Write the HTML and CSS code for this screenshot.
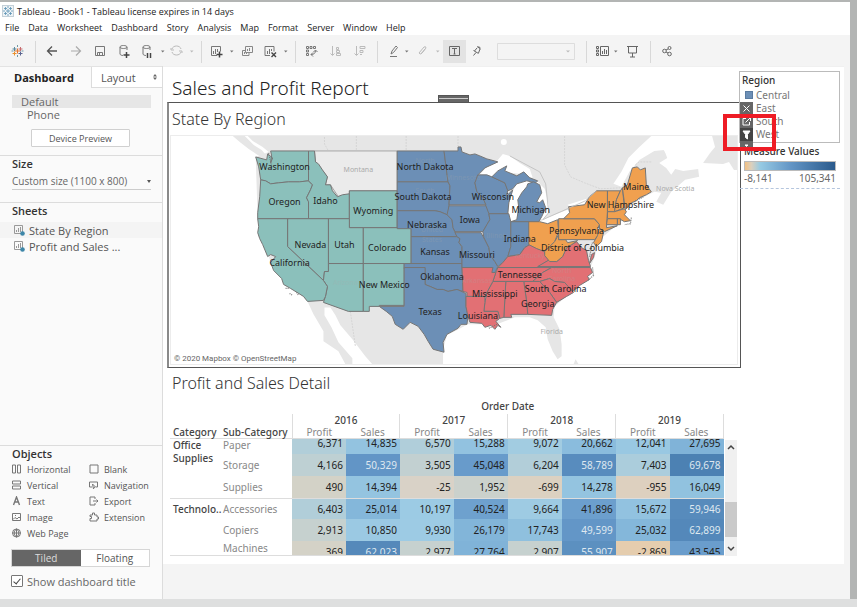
FILE: index.html
```html
<!DOCTYPE html>
<html lang="en">

<head>
	<meta charset="UTF-8">
	<title>Tableau - Book1</title>
	<link rel="stylesheet" href="styles.css">
</head>

<body>
	<div class="window">
		<header class="title_bar">
			<svg class="logo" width="12" height="12" viewBox="0 0 12 12">
				<rect x="0.5" y="0.5" width="11" height="11" fill="#eef3f6" stroke="#c3d0d8"/>
				<path d="M6 4v4M4 6h4M3.500 2v3M2 3.500h3M8.500 2v3M7 3.500h3M3.500 7v3M2 8.500h3M8.500 7v3M7 8.500h3M6 1v2M6 9v2M1 6h2M9 6h2" stroke="#5c93b5" stroke-width="0.8"/>
			</svg>
			<span>Tableau - Book1 - Tableau license expires in 14 days</span>
		</header>
		<nav class="menu">
			<button>File</button>
			<button>Data</button>
			<button>Worksheet</button>
			<button>Dashboard</button>
			<button>Story</button>
			<button>Analysis</button>
			<button>Map</button>
			<button>Format</button>
			<button>Server</button>
			<button>Window</button>
			<button>Help</button>
		</nav>

		<!-- Toolbar -->
		<svg class="toolbar" height="31" viewBox="0 35 850 31" preserveAspectRatio="xMinYMin meet" role="img" aria-label="Toolbar">
			<path stroke="#d8d8d8" d="M35.500 41v22M201.500 41v22M295.500 41v22M377.500 41v22M586.500 41v22M650.500 41v22"/>
			<g stroke-width="1">
				<path d="M17.500 48.500v5M15 51h5" stroke="#e8762c"/>
				<path d="M14.500 47v4M12.500 49h4" stroke="#59879b"/>
				<path d="M20.500 47v4M18.500 49h4" stroke="#c76b6e"/>
				<path d="M14.500 51.500v4M12.500 53.500h4" stroke="#eb912c"/>
				<path d="M20.500 51.500v4M18.500 53.500h4" stroke="#5b6591"/>
				<path d="M17.500 45v2M17.500 55v2M11.500 51h2M21.500 51h2" stroke="#7099a6"/>
			</g>
			<g fill="none" stroke="#555">
				<path d="M57 51h-9M52 46.500L47.500 51l4.500 4.500" stroke-width="1.300"/>
				<path d="M71 51h9M76 46.500l4.500 4.500l-4.500 4.500" stroke="#aaa" stroke-width="1.200"/>
				<path d="M95.500 46.500h9v9h-9zM97.500 55.500v-3h5v3M99.500 55v-2" stroke="#777"/>
				<path d="M127 50v-3c0-2-7-2-7 0v7c0 1 2 1.500 3 1.500M120 47c0 2 7 2 7 0" stroke="#777"/>
				<path d="M126.500 52v6M123.500 55h6" stroke="#444" stroke-width="1.500"/>
				<path d="M150 50v-3c0-2-7-2-7 0v7c0 1 2 1.500 3 1.500M143 47c0 2 7 2 7 0" stroke="#777"/>
				<path d="M147.500 53v5M150.500 53v5" stroke="#444" stroke-width="1.500"/>
				<path d="M172 49c1-4 8-4 9 0M172 52c1 4 8 4 9 0M171 48v2h3M182 53v-2h-3" stroke="#bbb"/>
				<path d="M217 55.500h-5.500v-9h9v5M213.500 54v-3M215.500 54v-5M217.500 52v-3" stroke="#777"/>
				<path d="M219.500 51.500v6M216.500 54.500h6" stroke="#444" stroke-width="1.500"/>
				<path d="M245.500 46.500h7v6h-7zM249 52.500v3h-6.500v-5h3M247.500 51v-2M249.500 51v-3M244.500 54v-2M246.500 54v-1" stroke="#888"/>
				<path d="M270 55.500h-5v-9h9v5M267.500 54v-3M269.500 54v-5M271.500 51v-2" stroke="#777"/>
				<path d="M271.500 52.500l4.500 4.500M276 52.500l-4.500 4.500" stroke="#444" stroke-width="1.400"/>
				<path d="M306.500 46.500h2v2h-2zM310 46.500h2v2h-2zM313.500 46.500h2v2h-2zM306.500 50h2v2h-2zM306.500 53.500h2v2h-2zM315.500 50.500q0 4-4.500 4M313 52.500l-2 2l2 2M313.500 52l2-2l2 2" stroke="#777"/>
				<path d="M332.500 46v9M330.500 53.500l2 2l2-2M336.500 47.500h2v2h-2zM336.500 50.500h3v2h-3zM336.500 53.500h4v2h-4z" stroke="#bbb"/>
				<path d="M356.500 46v9M354.500 53.500l2 2l2-2M360 46.500h5v2h-5zM360 50.500h3v2h-3zM360 54.500h2" stroke="#bbb"/>
				<path d="M391 54l1-3l4-5l1.500 1.500l-4 5zM390 56.500h7" stroke="#777"/>
				<path d="M419 53l5-6q2-1 2 1l-4 5q-2 2-3 0M421 54l4-5" stroke="#bbb"/>
			</g>
			<path fill="#777" d="M161 50.500h3.500l-1.800 2zM230 50.500h3.500l-1.800 2zM284 50.500h3.500l-1.800 2zM405 50.500h3.500l-1.800 2zM614 50.500h3.500l-1.800 2z"/>
			<path fill="#bbb" d="M190 50.500h3.500l-1.800 2zM436 50.500h3.500l-1.800 2zM566 50.500h4l-2 2z"/>
			<rect x="443" y="40" width="23" height="23" fill="#e3e3e3"/>
			<g fill="none" stroke="#666">
				<path d="M449.500 46.500h10v9h-10zM452 48.500h5M454.500 49v5M453.500 54h2"/>
				<path d="M478.500 46.500l2 1.500M477 48l-2.500 3M480 49l-1.500 4M473.500 50.500l5 3M476 52.500l-2.500 3M477 46.500l3.500 2.500"/>
				<path d="M497.500 43.500h77v16h-77z" stroke="#ddd"/>
				<path d="M596.500 46.500h2v2h-2zM596.500 50h2v2h-2zM596.500 53.500h2v2h-2zM600.500 46.500h8v9h-8zM602.500 54v-3M604.500 54v-5M606.500 54v-4"/>
				<path d="M627 46.500h11M628.500 47v6h8v-6M632.500 53v4M630 57h5"/>
				<circle cx="664.500" cy="51" r="1.800"/>
				<circle cx="669.500" cy="48" r="1.500"/>
				<circle cx="669.500" cy="54" r="1.800"/>
				<path d="M666 50l2-1M666 52l2 1"/>
			</g>
		</svg>

		<div class="workspace">
			<aside class="sidebar">
				<div class="tabs">
					<button class="tab active">Dashboard</button>
					<button class="tab">Layout
						<svg width="4" height="6" viewBox="0 0 4 6"><path d="M0 2.500L2 0l2 2.500zM0 3.500L2 6l2-2.500z" fill="#666"/></svg>
					</button>
				</div>
				<section class="device">
					<div class="device_item selected">Default</div>
					<div class="device_item phone">Phone</div>
					<button class="preview">Device Preview</button>
				</section>
				<section class="size">
					<h3><label for="size">Size</label></h3>
					<div class="select_box">
						<select id="size">
							<option>Custom size (1100 x 800)</option>
						</select>
					</div>
				</section>
				<section class="sheets">
					<h3>Sheets</h3>
					<div class="sheet hovered">
						<svg width="11" height="11" viewBox="0 0 11 11"><path d="M.5.500h8v8h-8zM2.500 7V5M4.500 7V3M6.500 7V2" fill="none" stroke="#999"/><circle cx="8.500" cy="8.500" r="2.300" fill="#3d86a8"/></svg>
						State By Region
					</div>
					<div class="sheet">
						<svg width="11" height="11" viewBox="0 0 11 11"><path d="M.5.500h8v8h-8zM2.500 7V5M4.500 7V3M6.500 7V2" fill="none" stroke="#999"/><circle cx="8.500" cy="8.500" r="2.300" fill="#3d86a8"/></svg>
						Profit and Sales ...
					</div>
				</section>
				<section class="objects">
					<h3>Objects</h3>
					<div class="object_list">
						<div><svg viewBox="0 0 10 10"><path d="M.5 1h3v8h-3zM5.500 1h3v8h-3z"/></svg>Horizontal</div>
						<div><svg viewBox="0 0 10 10"><path d="M1 1h8v8H1z"/></svg>Blank</div>
						<div><svg viewBox="0 0 10 10"><path d="M.5 1h8v3h-8zM.5 6h8v3h-8z"/></svg>Vertical</div>
						<div><svg viewBox="0 0 10 10"><path d="M3 7H.5V2h8v5H7M3.500 4l3 3-1.500.5-.5 1.500z"/></svg>Navigation</div>
						<div><svg viewBox="0 0 10 10"><path d="M1.500 9L4.500 1 7.500 9M2.500 6h4" stroke-width="1.400"/></svg>Text</div>
						<div><svg viewBox="0 0 10 10"><path d="M6 3V1H1v8h5V7M4 5h5M7.500 3.500L9 5 7.500 6.500"/></svg>Export</div>
						<div><svg viewBox="0 0 10 10"><path d="M.5 1.500h8v7h-8zM1 7.500l2-2 2 1.500L7 5l1.500 1.500M3 3.500h1"/></svg>Image</div>
						<div><svg viewBox="0 0 10 10"><path d="M1 9V6.500h1.500v-2H1V3h2.500V1h2v2H8v2h1.500v2H8v2z"/></svg>Extension</div>
						<div><svg viewBox="0 0 10 10"><circle cx="4.500" cy="5" r="4"/><path d="M.5 5h8M4.500 1v8M4.500 1c-3 2-3 6 0 8c3-2 3-6 0-8"/></svg>Web Page</div>
					</div>
					<div class="mode">
						<button class="on">Tiled</button>
						<button>Floating</button>
					</div>
					<label class="show_title"><input type="checkbox" checked> Show dashboard title</label>
				</section>
			</aside>

			<main class="canvas">
				<div class="dashboard">
					<div class="sheets_column">
						<h1>Sales and Profit Report</h1>
						<section class="map_panel">
							<span class="grip"></span>
							<h2>State By Region</h2>
							<svg class="map" viewBox="170 136 568 229">
								<!-- Base map: Canada, Mexico, Florida and the uncoloured states -->
								<g fill="#e6e6e6">
									<path d="M232 136h12l9 9l8 5l6 7l-2 2l-8-4l-9-6l-9-7z"/>
									<path d="M247 136H652L640 147L629 158L622 172L614 184L622 187L630 172L640 160L655 151L665 150L668 158L660 163L667 168L672 175L676 169L684 171L699 169L700 177L686 180L672 192L664 205L657 202L662 193L655 192L647 196L640 200L626 210L626 218L600 240L595 258L590 270L575 290L555 307L554 318L560 330L562 345L562 357L558 360L553 352L548 340L546 328L538 321L530 318H515L497 325L485 325L468 325L447 336L443 350L443 365H372L365 357L352 340L340 326L335 316L330 308L324 308L324 316L331 328L338 343L352 359V365H345L338 352L323 342L323 332L313 315L307 302L270 263L257 219L255 157L268 152L262 147L252 141z"/>
									<path d="M713 136h25v34l-3 0l-5-8l-6 2l-20-1l7-10l5-6z"/>
									<path d="M574 365l2-5l3 5z"/>
								</g>
								<g fill="none" stroke="#d5d5d5" stroke-dasharray="2 1">
									<path d="M324 137v7l4 7M356 136v15M406 136v15M458 136v10M565 136v29l6 12l14 6l16 6l20-1M636 165l4-3l12 0M460 157l10 30M350 312l5 35"/>
								</g>
								<path d="M397 191H349V197L338 197L330 185L325 185L327 177L315 162L314 151H397z" fill="#ebebeb" stroke="#a5a5a5"/>

								<!-- Great Lakes and sea inlets -->
								<g fill="#fff">
									<path d="M480 175L487 167L498 160L503 154L510 156L520 163L530 169L533 178L520 174L503 172L492 177z"/>
									<path d="M513 187L520 182L530 181L538 182L545 189L549 205L548 214L543 220L537 217L530 195L520 203L517 220L512 224L508 220L510 200z"/>
									<path d="M540 222L550 217L568 210L572 213L559 221L550 225zM568 205L587 199L588 204L571 208z"/>
									<path d="M655 138L663 136H710L703 150L695 161L682 165L673 162L660 144L648 146z"/>
									<circle cx="504" cy="142" r="3"/>
								</g>

								<g class="west">
									<path d="M270 151H308V181L299 182L288 182L278 183L270 184L265 181L260 180L258 167L255 157L266 160L267 154L272 158L270 163L271 156z"/>
									<path d="M260 180L265 181L270 184L278 183L288 182L299 182L308 181L312 185L310 190L306 198L308 202V219H257V213L259 197z"/>
									<path d="M308 151H314L315 162L318 164L322 170L327 177L325 185L330 185L332 191L337 197L342 195L349 194V219H308V202L306 198L310 190L312 185L308 181z"/>
									<path d="M349 191H397V228H349z"/>
									<path d="M287 219H328V272L324 272L323 281L287 247z"/>
									<path d="M328 219H349V228H363V264H328z"/>
									<path d="M363 228H411V264H363z"/>
									<path d="M328 264H363V312H348L323 303L325 297L327 287L323 281L324 272L328 272z"/>
									<path d="M363 264H404V306H379V307H369V312H363z"/>
									<path d="M257 219H287V247L323 281L327 287L325 297L323 301L307 302L303 297L290 289L283 285L281 279L273 271L270 263L275 257L270 255L267 257L262 245L259 239L257 233L258 227z"/>
								</g>
								<g class="central">
									<path d="M397 151H444L446 167L448 182H397z"/>
									<path d="M397 182H448L450 186L449 205L449 212L447 215L440 212L435 211H397z"/>
									<path d="M397 211H435L440 212L447 215L452 220L453 228L457 237H411V229H397z"/>
									<path d="M411 237H457L460 239L459 243L462 247V264H411z"/>
									<path d="M404 264H462L463 292L457 290L448 292L443 290L437 290L430 287L425 285V269H404z"/>
									<path d="M404 268H425V285L430 287L437 290L443 290L448 292L457 290L466 294V307L468 317L467 325L461 325L458 329L447 335L443 343L444 353L433 350L428 342L424 335L418 327L410 323L403 330L395 325L392 317L386 312L379 307H404z"/>
									<path d="M444 151H458V147H461L462 152L470 155L475 154L480 156L487 159L491 160L498 162L485 168L478 175L475 183L477 192L483 198L486 205H449L450 186L448 182L446 167z"/>
									<path d="M478 175L487 175L492 177L505 183L508 190L507 196L513 190L509 203L508 214H489L485 208L486 205L483 198L477 192L475 183z"/>
									<path d="M492 177L498 171L507 166L505 171L517 176L524 172L530 178L538 181L536 183L527 181L517 184L513 189L508 191L505 183z"/>
									<path d="M527 187L528 184L534 182L540 185L542 193L537 202L540 203L543 200L546 208L542 217L539 222H511L517 220L519 208L518 200L522 193z"/>
									<path d="M449 206H486L489 214L490 220L487 225L483 232H455L453 228L452 220L447 215z"/>
									<path d="M455 233H481L485 240L489 248L490 255L495 262L498 267L495 273H491L493 268H462V247L459 243L460 239L457 237z"/>
									<path d="M489 214H509L511 222V247L508 257L503 263L498 267L495 262L490 255L489 248L484 238L483 232L487 225L490 220z"/>
									<path d="M511 222H530V245L525 248L520 255L508 257L511 247z"/>
								</g>
								<g class="south">
									<path d="M498 268L503 263L508 257L520 255L525 248L530 245L540 250L545 252L545 256L550 260L542 265L538 268z"/>
									<path d="M538 267L550 260L557 262L563 257L567 248L577 242L582 248L587 251L589 261L591 267z"/>
									<path d="M592 255L595 253L594 258L590 264z"/>
									<path d="M498 268H552L543 273L533 282H493L496 273z"/>
									<path d="M552 268H591L593 273L588 277L590 280L580 286L572 293L565 283L555 282L550 279L540 282H533L543 273z"/>
									<path d="M540 282L550 279L555 282L565 283L574 293L567 297L557 303L550 293z"/>
									<path d="M524 282H540L550 293L557 303L553 310L552 316L528 315L527 303z"/>
									<path d="M506 282H524L527 303L528 315H511L512 318H504z"/>
									<path d="M493 282H506L504 318L500 319L498 312H484L485 303L487 293z"/>
									<path d="M462 268H493L492 273L496 273L493 282L487 293L485 297H467V293L463 292z"/>
									<path d="M466 297H485V303L484 312H498L500 319L496 322L501 328L498 326L495 330L491 326L485 328L482 324L470 323L468 317L466 307z"/>
								</g>
								<g class="east">
									<path d="M529 222L540 222L548 224L558 220L559 232L555 242L549 248L545 252L537 249L529 245z"/>
									<path d="M545 252L549 248L555 242L559 235V240H566L568 243L578 241L572 245L567 248L563 257L557 262H550L545 256z"/>
									<path d="M559 219H595L600 225L598 229L602 232L595 240H559z"/>
									<path d="M564 219L570 213L569 207L585 205L590 197L597 191H608V212L607 228L618 226L605 232L600 229V225L595 219z"/>
									<path d="M608 191H621L617 200L615 212H608z"/>
									<path d="M621 191L623 188L625 208L615 212L617 200z"/>
									<path d="M623 188L628 185L633 168L638 167L641 170L646 168L647 185L652 192L647 195L640 198L637 201L632 203L626 210z"/>
									<path d="M608 212H615L625 209L627 212L625 215L631 221L625 222L620 219H608z"/>
									<path d="M608 219H618V225H607zM618 219H621V225H618z"/>
									<path d="M600 228L604 233L602 242L597 247L594 243L598 236z"/>
								</g>
								<g fill="none" stroke="#777" stroke-width="1.200" stroke-dasharray="1 1">
									<path d="M285 289h4M289 294l3 2M296 293l2 3M593 243l-3 8M593 268l1 8l-6 5M632 218l-1 6l-6 1M590 257l2-9M636 201l8-4M268 153l3 13l-2 4M497 325l-8 4"/>
								</g>
								<path d="M510 156L540 172L546 184L549 213L543 220L586 201L597 191" fill="none" stroke="#bbb" stroke-width="0.800"/>

								<g class="place">
									<text x="358" y="172">Montana</text>
									<text x="676" y="191">Nova Scotia</text>
									<text x="552" y="335">Florida</text>
									<g opacity="0.250">
										<text x="425" y="163">North</text>
										<text x="425" y="193">South</text>
										<text x="463" y="180">Minnesota</text>
										<text x="432" y="232">United</text>
										<text x="432" y="242">States</text>
										<text x="497" y="238">Illinois</text>
										<text x="530" y="258">Kentucky</text>
										<text x="477" y="284">Arkansas</text>
										<text x="345" y="286">Arizona</text>
										<text x="562" y="274">North</text>
										<text x="562" y="282">Carolina</text>
									</g>
								</g>
								<g class="state">
									<text x="284" y="170">Washington</text>
									<text x="284" y="205">Oregon</text>
									<text x="325" y="204">Idaho</text>
									<text x="373" y="214">Wyoming</text>
									<text x="310" y="248">Nevada</text>
									<text x="344" y="248">Utah</text>
									<text x="387" y="251">Colorado</text>
									<text x="289" y="266">California</text>
									<text x="384" y="289">New Mexico</text>
									<text x="425" y="170">North Dakota</text>
									<text x="423" y="200">South Dakota</text>
									<text x="427" y="228">Nebraska</text>
									<text x="435" y="255">Kansas</text>
									<text x="442" y="281">Oklahoma</text>
									<text x="430" y="316">Texas</text>
									<text x="470" y="223">Iowa</text>
									<text x="477" y="258">Missouri</text>
									<text x="493" y="200">Wisconsin</text>
									<text x="531" y="213">Michigan</text>
									<text x="520" y="242">Indiana</text>
									<text x="520" y="279">Tennessee</text>
									<text x="495" y="298">Mississippi</text>
									<text x="478" y="320">Louisiana</text>
									<text x="538" y="308">Georgia</text>
									<text x="556" y="293">South Carolina</text>
									<text x="583" y="251">District of Columbia</text>
									<text x="577" y="234">Pennsylvania</text>
									<text x="621" y="208">New Hampshire</text>
									<text x="637" y="190">Maine</text>
								</g>
								<text class="credit" x="173" y="362">© 2020 Mapbox © OpenStreetMap</text>
							</svg>
							<div class="panel_tools">
								<button aria-label="Remove"><svg viewBox="0 0 13 13"><path d="M3.500 3.500l6 6M9.500 3.500l-6 6"/></svg></button>
								<button aria-label="Go to sheet"><svg viewBox="0 0 13 13"><path d="M6 3.500H3v6.500h6.500V7M5.500 7.500L10 3M7 2.500h3.500V6"/></svg></button>
								<button class="filter" aria-label="Use as filter"><svg viewBox="0 0 13 13"><path d="M3 3h7L7.500 6.500V11l-2-1.500v-3z" fill="#fff"/></svg></button>
								<button class="more" aria-label="More options"><svg viewBox="0 0 13 13"><path d="M5 4h3L6.500 5.500z" fill="#fff"/></svg></button>
							</div>
						</section>

						<section class="detail">
							<h2>Profit and Sales Detail</h2>
							<div class="table_wrap">
								<table>
									<colgroup>
										<col class="col_category">
										<col class="col_sub">
										<col span="8">
									</colgroup>
									<thead>
										<tr class="dimension"><th colspan="2"></th><th colspan="8">Order Date</th></tr>
										<tr class="years">
											<th colspan="2"></th>
											<th colspan="2">2016</th>
											<th colspan="2">2017</th>
											<th colspan="2">2018</th>
											<th colspan="2">2019</th>
										</tr>
										<tr class="measures">
											<th class="left">Category</th><th class="left sub_head">Sub-Category</th>
											<td class="year_start">Profit</td><td>Sales</td>
											<td class="year_start">Profit</td><td>Sales</td>
											<td class="year_start">Profit</td><td>Sales</td>
											<td class="year_start">Profit</td><td>Sales</td>
										</tr>
									</thead>
									<tbody id="detail_rows"></tbody>
								</table>
								<div class="scrollbar">
									<svg viewBox="0 0 12 14"><path d="M3 9l3-3l3 3"/></svg>
									<span class="thumb"></span>
									<svg viewBox="0 0 12 14"><path d="M3 5l3 3l3-3"/></svg>
								</div>
							</div>
						</section>
					</div>

					<div class="legends">
						<section class="legend region">
							<h4>Region</h4>
							<ul>
								<li><i class="swatch central_swatch"></i>Central</li>
								<li><i class="swatch"></i>East</li>
								<li><i class="swatch"></i>South</li>
								<li><i class="swatch"></i>West</li>
							</ul>
						</section>
						<section class="legend measure">
							<h4>Measure Values</h4>
							<div class="ramp"></div>
							<div class="ramp_range"><span>-8,141</span><span>105,341</span></div>
						</section>
						<span class="highlight"></span>
					</div>
				</div>
			</main>
		</div>
	</div>
	<script src="script.js"></script>
</body>

</html>
```

FILE: styles.css
```css
* {
	box-sizing: border-box;
}

body {
	margin: 0;
	min-height: 100vh;
	display: flex;
	padding: 2px 7px 8px 0;
	background: linear-gradient(#dedfdf, #dedfdf) bottom / 100% 8px no-repeat #b3b5b4;
	font-family: "Open Sans", "Noto Sans", sans-serif;
	font-size: 10px;
	color: #555;
}

h1, h2, h3, h4 {
	margin: 0;
	font-weight: normal;
}

button {
	font: inherit;
	color: inherit;
	padding: 0;
	margin: 0;
	border: 0;
	background: none;
}

.window {
	flex: 1;
	min-width: 0;
	display: flex;
	flex-direction: column;
	background: #fff;
}

.title_bar {
	display: flex;
	align-items: center;
	gap: 3px;
	height: 18px;
	padding-left: 2px;
	font-size: 9px;
	color: #222;
}

.menu {
	display: flex;
	gap: 9px;
	height: 15px;
	padding-left: 5px;
	font-size: 9px;
	line-height: 15px;
	color: #222;
}

.toolbar {
	display: block;
	width: 100%;
	background: #f4f4f4;
}

.workspace {
	flex: 1;
	display: flex;
}

/* Left pane */
.sidebar {
	width: 163px;
	display: flex;
	flex-direction: column;
	background: #fafafa;
	border-right: 1px solid #dcdcdc;
}

.sidebar h3 {
	font-size: 11px;
	font-weight: 600;
	line-height: 16px;
	color: #333;
	padding-left: 12px;
}

.tabs {
	display: flex;
	height: 22px;
	border-top: 1px solid #e3e3e3;
}

.tab {
	flex: 1;
	display: flex;
	align-items: center;
	justify-content: space-between;
	padding: 0 5px 0 9px;
	font-size: 11px;
	background: #fff;
	border-left: 1px solid #dcdcdc;
	border-bottom: 1px solid #dcdcdc;
}

.tab.active {
	flex: 0 0 91px;
	padding-left: 14px;
	font-weight: bold;
	color: #222;
	background: none;
	border: 0;
}

.device {
	height: 67px;
	padding: 7px 11px 0 12px;
}

.device_item {
	height: 13px;
	line-height: 13px;
	padding-left: 9px;
	font-size: 11px;
	color: #666;
}

.device_item.selected {
	background: #e6e6e6;
}

.device_item.phone {
	padding-left: 15px;
}

.preview {
	display: block;
	width: 99px;
	height: 18px;
	margin: 8px 0 0 19px;
	border: 1px solid #d0d0d0;
	border-radius: 1px;
	background: #fff;
	font-size: 9px;
}

.size, .sheets, .objects {
	border-top: 1px solid #dcdcdc;
}

.size {
	height: 47px;
}

.select_box {
	position: relative;
	margin: 1px 11px 0 12px;
	border-bottom: 1px solid #ccc;
}

.select_box::after {
	content: "";
	position: absolute;
	right: 0;
	top: 7px;
	border: 2px solid transparent;
	border-top: 3px solid #555;
}

select {
	display: block;
	width: 100%;
	height: 16px;
	padding: 0;
	border: 0;
	appearance: none;
	background: none;
	font: inherit;
	color: #666;
}

.sheets {
	flex: 1;
}

.sheets h3 {
	margin-bottom: 3px;
}

.sheet {
	display: flex;
	align-items: center;
	gap: 4px;
	height: 16px;
	padding-left: 14px;
	font-size: 11px;
}

.sheet.hovered {
	background: #f4f4f4;
}

.objects h3 {
	line-height: 15px;
}

.object_list {
	display: grid;
	grid-template-columns: 77px 1fr;
	grid-auto-rows: 16px;
	padding-left: 12px;
	font-size: 9px;
}

.object_list div {
	display: flex;
	align-items: center;
	gap: 5px;
}

.object_list svg {
	width: 10px;
	height: 10px;
	fill: none;
	stroke: #777;
}

.mode {
	display: flex;
	height: 18px;
	margin: 8px 12px 5px 11px;
	border: 1px solid #d6d6d6;
}

.mode button {
	flex: 1;
	background: #fff;
}

.mode .on {
	background: #666;
	color: #ddd;
}

.show_title {
	display: flex;
	align-items: center;
	gap: 4px;
	height: 18px;
	margin: 0 0 9px 11px;
	font-size: 11px;
	color: #666;
}

.show_title input {
	appearance: none;
	position: relative;
	width: 12px;
	height: 12px;
	margin: 0;
	border: 1px solid #777;
	border-radius: 1px;
	background: #fff;
}

.show_title input:checked::after {
	content: "";
	position: absolute;
	left: 3px;
	top: 1px;
	width: 3px;
	height: 6px;
	border: solid #444;
	border-width: 0 1px 1px 0;
	transform: rotate(40deg);
}

/* Dashboard */
.canvas {
	flex: 1;
	min-width: 0;
	padding-right: 6px;
	background: #f4f4f4;
}

.dashboard {
	display: flex;
	padding: 0 4px 8px;
	border-top: 1px solid #f0f0f0;
	background: #fff;
}

.sheets_column {
	flex: 1;
	min-width: 0;
}

h1 {
	height: 35px;
	padding: 7px 0 0 5px;
	font-family: "Noto Sans", sans-serif;
	font-size: 19px;
	font-weight: 300;
	line-height: 28px;
	color: #222;
}

h2 {
	font-family: "Noto Sans", sans-serif;
	font-size: 16px;
	font-weight: 300;
	line-height: 32px;
	padding-left: 5px;
	color: #333;
}

.map_panel {
	position: relative;
	margin-right: -2px;
	border: 1px solid #555;
	border-left: 2px solid #8a8a8a;
	padding: 0 2px 2px 1px;
}

.map_panel h2 {
	padding-left: 2px;
}

.grip {
	position: absolute;
	left: 50%;
	top: -8px;
	width: 31px;
	height: 8px;
	margin-left: -17px;
	border: 1px solid #555;
	background: linear-gradient(#666 2px, #ccc 2px, #ccc 3px, #666 3px);
}

.map {
	display: block;
	width: 100%;
	border: 1px solid #ececec;
}

.west, .central, .south, .east {
	stroke: #757575;
	stroke-width: 1;
	stroke-linejoin: round;
}

.west { fill: #8bc0bb; }
.central { fill: #6c8fb6; }
.south { fill: #e27074; }
.east { fill: #f0a04f; }

.state {
	font-family: "Noto Sans", sans-serif;
	font-size: 9px;
	text-anchor: middle;
	fill: #222;
}

.place {
	font-family: "Noto Sans", sans-serif;
	font-size: 7px;
	text-anchor: middle;
	fill: #aaa;
}

.credit {
	font-family: Roboto, sans-serif;
	font-size: 8px;
	fill: #666;
}

.panel_tools {
	position: absolute;
	right: -13px;
	top: -1px;
	z-index: 1;
	display: flex;
	flex-direction: column;
	background: #666;
}

.panel_tools button {
	width: 13px;
	height: 13px;
}

.panel_tools svg {
	display: block;
	fill: none;
	stroke: #fff;
}

.panel_tools .filter {
	background: #444;
}

.panel_tools .more {
	height: 9px;
	overflow: hidden;
}

/* Text table */
.detail {
	font-family: "Noto Sans", sans-serif;
}

.detail h2 {
	line-height: 31px;
}

.table_wrap {
	display: flex;
	align-items: flex-end;
	padding: 0 2px 0 3px;
}

table {
	flex: 1;
	table-layout: fixed;
	width: 100%;
	border-collapse: collapse;
	border-bottom: 1px solid #ddd;
}

th, td {
	padding: 0;
	vertical-align: top;
}

th {
	font-weight: 500;
	color: #444;
}

.col_category { width: 50px; }
.col_sub { width: 72px; }

.left {
	text-align: left;
	padding-left: 3px;
}

.dimension th {
	height: 14px;
	line-height: 15px;
}

.years th {
	height: 13px;
	line-height: 13px;
}

.years th + th, .year_start {
	border-left: 1px solid #ddd;
}

.years th:last-child, .measures td:last-child {
	border-right: 1px solid #ddd;
}

.measures th, .measures td {
	height: 11px;
	line-height: 11px;
	border-bottom: 1px solid #ddd;
}

.measures td {
	text-align: center;
	color: #888;
}

tbody th {
	text-align: left;
	line-height: 13px;
	padding-left: 3px;
}

tbody .sub {
	font-weight: normal;
	color: #888;
}

tbody td, tbody .sub {
	height: 22px;
	line-height: 22px;
}

tbody td {
	padding-right: 3px;
	text-align: right;
	color: #222;
}

tbody td.light {
	color: #dfe8f0;
}

.group_start th, .group_start td, .group_start .sub {
	height: 21px;
	line-height: 20px;
	border-top: 1px solid #ddd;
}

.cut_top td {
	height: 15px;
	line-height: 9px;
}

.cut_top .sub {
	height: 15px;
	line-height: 13px;
}

.cut_bottom td, .cut_bottom .sub {
	height: 13px;
}

.cut_bottom .sub {
	line-height: 14px;
}

.cut_bottom td div {
	height: 13px;
	overflow: hidden;
}

.scrollbar {
	display: flex;
	flex-direction: column;
	width: 12px;
	height: 116px;
	margin-left: 1px;
	background: #f0f0f0;
}

.scrollbar svg {
	height: 14px;
	fill: none;
	stroke: #444;
	stroke-width: 1.500;
}

.thumb {
	height: 35px;
	margin: auto 0 5px;
	background: #cacaca;
}

/* Legends */
.legends {
	position: relative;
	width: 101px;
	padding-top: 4px;
	font-family: "Noto Sans", sans-serif;
}

.legend h4 {
	font-weight: 500;
	line-height: 13px;
	color: #333;
}

.region {
	height: 72px;
	padding: 2px 0 0 2px;
	border: 1px solid #bbb;
}

.region ul {
	margin: 1px 0 0;
	padding: 0 0 0 3px;
	list-style: none;
	color: #777;
}

.region li {
	display: flex;
	align-items: center;
	gap: 3px;
	height: 13px;
}

.swatch {
	width: 8px;
	height: 8px;
}

.central_swatch {
	background: #6c8fb6;
	border: 1px solid #5a7ba0;
}

.measure {
	margin-left: 1px;
	padding: 2px 4px 2px;
	border-bottom: 1px dashed #b5c6de;
	color: #666;
}

.ramp {
	height: 10px;
	margin-top: 3px;
	border: 1px solid #bbb;
	background: linear-gradient(90deg, #f3c183, #dcd0bd 7%, #96cae3 17%, #6496c6 50%, #2a5a8c);
}

.ramp_range {
	display: flex;
	justify-content: space-between;
	line-height: 15px;
}

.highlight {
	position: absolute;
	left: -16px;
	top: 47px;
	z-index: 2;
	width: 53px;
	height: 37px;
	border: 4px solid #ee1c25;
}
```

FILE: script.js
```js
// Profit and Sales for each year, 2016 to 2019
var rows = [
	{ category: 'Office Supplies', span: 3, sub: 'Paper', cut: 'cut_top', values: [6371, 14835, 6570, 15288, 9072, 20662, 12041, 27695] },
	{ sub: 'Storage', values: [4166, 50329, 3505, 45048, 6204, 58789, 7403, 69678] },
	{ sub: 'Supplies', values: [490, 14394, -25, 1952, -699, 14278, -955, 16049] },
	{ category: 'Technolo..', span: 3, sub: 'Accessories', values: [6403, 25014, 10197, 40524, 9664, 41896, 15672, 59946] },
	{ sub: 'Copiers', values: [2913, 10850, 9930, 26179, 17743, 49599, 25032, 62899] },
	{ sub: 'Machines', cut: 'cut_bottom', values: [369, 62023, 2977, 27764, 2907, 55907, -2869, 43545] }
];

// Colour scale stops
var stops = [
	[-8141, 243, 193, 131],
	[-2869, 229, 205, 174],
	[-25, 217, 210, 199],
	[490, 211, 210, 199],
	[2913, 198, 209, 207],
	[6371, 177, 206, 217],
	[9930, 157, 203, 228],
	[14835, 147, 195, 224],
	[25014, 132, 183, 218],
	[45048, 104, 155, 203],
	[69678, 76, 129, 179],
	[105341, 42, 90, 140]
];

function get_color(value) {
	for (var i = 1; i < stops.length; i++) {
		if (value <= stops[i][0]) {
			var a = stops[i - 1], b = stops[i];
			var t = (value - a[0]) / (b[0] - a[0]);
			var rgb = [1, 2, 3].map(function (k) {
				return Math.round(a[k] + (b[k] - a[k]) * t);
			});
			return 'rgb(' + rgb.join(',') + ')';
		}
	}
}

var html = '';
rows.forEach(function (row) {
	html += '<tr class="' + (row.cut || '') + (row.category && !row.cut ? ' group_start' : '') + '">';
	if (row.category) {
		html += '<th rowspan="' + row.span + '">' + row.category + '</th>';
	}
	html += '<th class="sub">' + row.sub + '</th>';
	row.values.forEach(function (value) {
		html += '<td class="' + (value > 46000 ? 'light' : '') + '" style="background:' + get_color(value) + '"><div>' +
			value.toLocaleString('en-US') + '</div></td>';
	});
	html += '</tr>';
});
document.getElementById('detail_rows').innerHTML = html;
```
